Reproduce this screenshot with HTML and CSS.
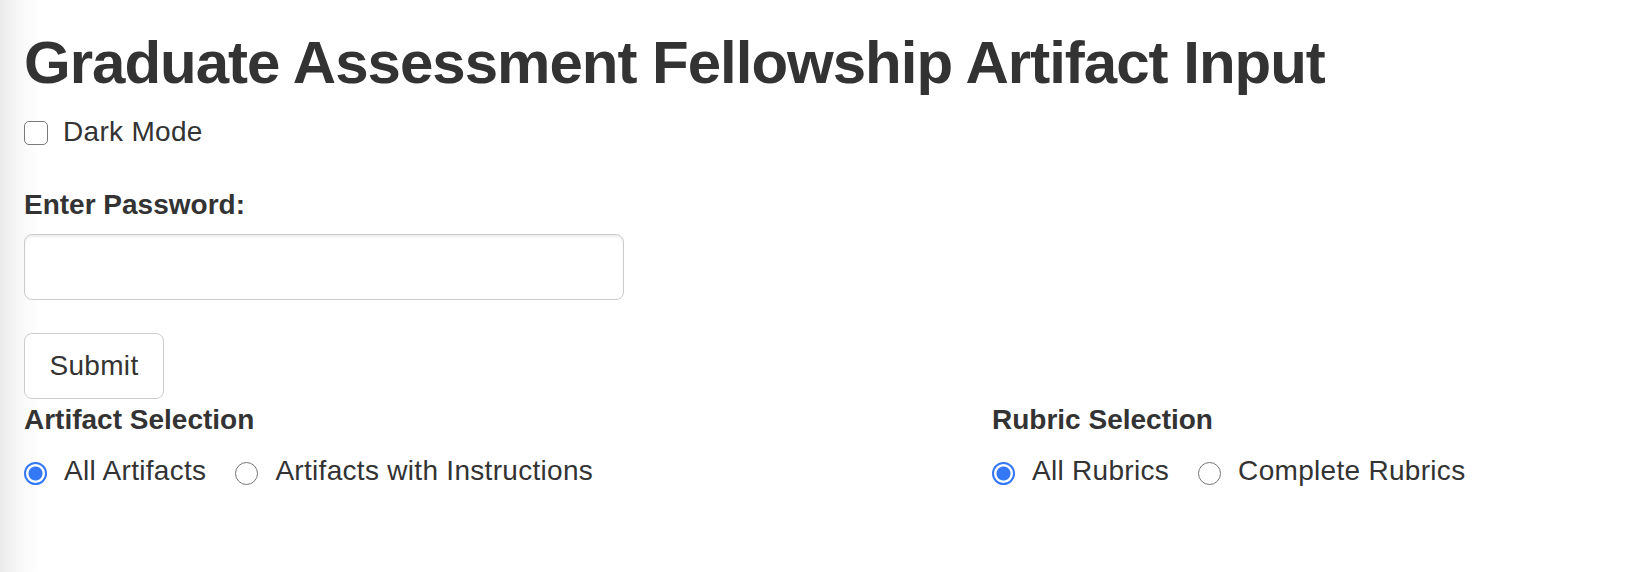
FILE: index.html
```html
<!DOCTYPE html>
<html lang="en">
<head>
<meta charset="utf-8">
<title>Graduate Assessment Fellowship Artifact Input</title>
<link rel="stylesheet" href="styles.css">
</head>
<body>
<main class="page">
  <h1 class="title">Graduate Assessment Fellowship Artifact Input</h1>
  <label class="toggle"><input type="checkbox" class="check"><span>Dark Mode</span></label>
  <div class="field">
    <label class="field-label" for="pw">Enter Password:</label>
    <input id="pw" class="text-input" type="password">
  </div>
  <button class="btn" type="button">Submit</button>
  <div class="selections">
    <section class="group">
      <div class="group-title">Artifact Selection</div>
      <div class="radios">
        <label class="radio-item"><input type="radio" class="radio" name="art" checked><span>All Artifacts</span></label>
        <label class="radio-item"><input type="radio" class="radio" name="art"><span>Artifacts with Instructions</span></label>
      </div>
    </section>
    <section class="group">
      <div class="group-title">Rubric Selection</div>
      <div class="radios">
        <label class="radio-item"><input type="radio" class="radio" name="rub" checked><span>All Rubrics</span></label>
        <label class="radio-item"><input type="radio" class="radio" name="rub"><span>Complete Rubrics</span></label>
      </div>
    </section>
  </div>
</main>
</body>
</html>
```

FILE: styles.css
```css
html, body {
  margin: 0;
  padding: 0;
  height: 100%;
}
body {
  background: linear-gradient(to right, #ebebeb 0px, #f7f7f7 18px, #ffffff 40px);
  color: #333333;
  font-family: "Liberation Sans", Helvetica, Arial, sans-serif;
  font-size: 28px;
  line-height: 40px;
  letter-spacing: 0.3px;
}
.page {
  padding: 0 24px;
  display: flex;
  flex-direction: column;
  align-items: flex-start;
}
.title {
  font-size: 60px;
  line-height: 66px;
  font-weight: 700;
  letter-spacing: -1px;
  margin: 30px 0 16px;
  color: #333333;
}
.toggle {
  display: flex;
  align-items: center;
  height: 40px;
}
.check {
  appearance: none;
  -webkit-appearance: none;
  margin: 2px 15px 0 0;
  width: 24px;
  height: 24px;
  border: 1.5px solid #7a7a7a;
  border-radius: 5px;
  background: #fff;
  box-sizing: border-box;
}
.field {
  margin-top: 33px;
  display: flex;
  flex-direction: column;
}
.field-label {
  font-weight: 700;
  line-height: 40px;
  letter-spacing: 0;
}
.text-input {
  margin-top: 9px;
  width: 600px;
  height: 66px;
  box-sizing: border-box;
  border: 1.5px solid #cccccc;
  border-radius: 8px;
  background: #fff;
  box-shadow: inset 0 2px 2px rgba(0, 0, 0, 0.075);
  font: inherit;
  padding: 0 18px;
}
.btn {
  margin-top: 33px;
  width: 140px;
  height: 66px;
  box-sizing: border-box;
  border: 1.5px solid #cccccc;
  border-radius: 8px;
  background: #ffffff;
  color: #333333;
  font: inherit;
  letter-spacing: 0.3px;
  padding: 0;
}
.selections {
  margin-top: 1px;
  display: grid;
  grid-template-columns: 968px 1fr;
  width: 100%;
}
.group-title {
  font-weight: 700;
  line-height: 40px;
  letter-spacing: 0;
}
.radios {
  margin-top: 11px;
  display: flex;
  gap: 29px;
}
.radio-item {
  display: flex;
  align-items: center;
  height: 40px;
}
.radio {
  appearance: none;
  -webkit-appearance: none;
  margin: 4px 17px 0 0;
  width: 23px;
  height: 23px;
  border-radius: 50%;
  box-sizing: border-box;
  border: 1.5px solid #767676;
  background: #fff;
}
.radio:checked {
  border: 2px solid #3478f6;
  background: radial-gradient(circle, #3478f6 0, #3478f6 6.5px, #ffffff 7.5px);
}
```
